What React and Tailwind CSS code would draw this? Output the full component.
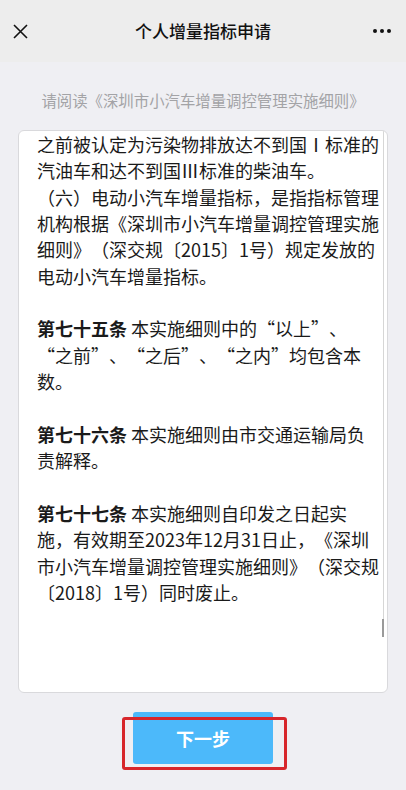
import React from "react";

const FONT = { fontFamily: '"Noto Sans CJK SC", "Noto Sans", sans-serif' };

function Line({ children }) {
  return <div className="whitespace-nowrap h-[26.35px] leading-[26.35px]">{children}</div>;
}

export default function App() {
  return (
    <div lang="zh-CN" style={FONT} className="[text-spacing-trim:space-all] w-[406px] h-[790px] bg-[#efeff3] overflow-hidden">
      <div className="relative h-[62px] bg-[#ededed] flex items-center justify-center">
        <svg className="absolute left-[13px] top-[24px]" width="15" height="15" viewBox="0 0 15 15">
          <path d="M1 1 L14 14 M14 1 L1 14" stroke="#111" strokeWidth="1.6" fill="none" />
        </svg>
        <span className="text-[17px] text-[#111] font-medium">个人增量指标申请</span>
        <div className="absolute right-[15px] top-[29px] flex gap-[3px]">
          <span className="w-[4px] h-[4px] rounded-full bg-[#111]" />
          <span className="w-[4px] h-[4px] rounded-full bg-[#111]" />
          <span className="w-[4px] h-[4px] rounded-full bg-[#111]" />
        </div>
      </div>
      <div className="pt-[25px] h-[68px] text-center text-[15.4px] leading-[26px] text-[#a3a3a6]">
        请阅读《深圳市小汽车增量调控管理实施细则》
      </div>
      <div className="relative mx-[18px] h-[563px] bg-white border border-[#d9d9dc] rounded-[6px] overflow-hidden">
        <div className="pl-[18px] text-[18px] text-[#1a1a1a]">
          <Line>之前被认定为污染物排放达不到国Ⅰ标准的</Line>
          <Line>汽油车和达不到国Ⅲ标准的柴油车。</Line>
          <Line>（六）电动小汽车增量指标，是指指标管理</Line>
          <Line>机构根据《深圳市小汽车增量调控管理实施</Line>
          <Line>细则》（深交规〔2015〕1号）规定发放的</Line>
          <Line>电动小汽车增量指标。</Line>
          <Line>{"\u00a0"}</Line>
          <Line><b className="font-bold">第七十五条</b> 本实施细则中的“以上”、</Line>
          <Line>“之前”、“之后”、“之内”均包含本</Line>
          <Line>数。</Line>
          <Line>{"\u00a0"}</Line>
          <Line><b className="font-bold">第七十六条</b> 本实施细则由市交通运输局负</Line>
          <Line>责解释。</Line>
          <Line>{"\u00a0"}</Line>
          <Line><b className="font-bold">第七十七条</b> 本实施细则自印发之日起实</Line>
          <Line>施，有效期至2023年12月31日止，《深圳</Line>
          <Line>市小汽车增量调控管理实施细则》（深交规</Line>
          <Line>〔2018〕1号）同时废止。</Line>
        </div>
        <div className="absolute right-[3px] top-0 w-px h-[490px] bg-[#d6d6d6]" />
        <div className="absolute right-[3px] top-[488px] w-[2px] h-[18px] bg-[#9a9a9a]" />
      </div>
      <div className="flex justify-center mt-[19px]">
        <div className="relative">
          <div className="w-[140px] h-[52px] rounded-[3px] bg-[#4cb9fa] flex items-center justify-center text-white text-[18px] font-bold">
            下一步
          </div>
          <div className="absolute left-[-11px] top-[5px] w-[165px] h-[53px] border-[3px] border-[#d7262b] rounded-[3px]" />
        </div>
      </div>
    </div>
  );
}
